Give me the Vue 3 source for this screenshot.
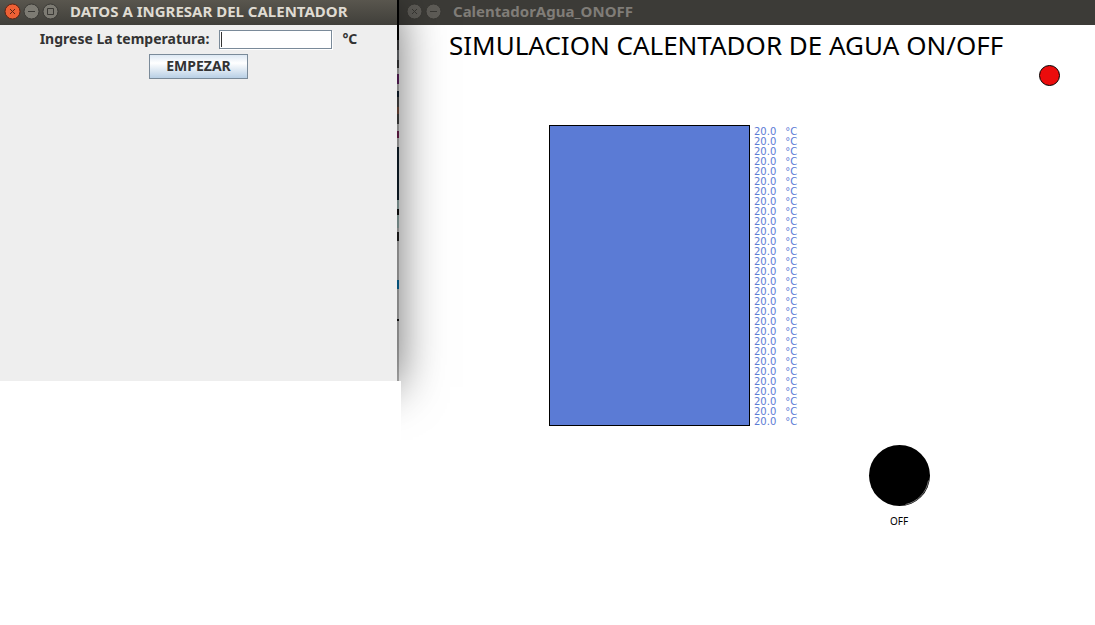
<script setup>
import { ref } from 'vue'

const temperature = ref('')
const readings = Array.from({ length: 30 }, () => '20.0')
</script>

<template>
  <main class="desktop">
    <div class="backdrop"></div>

    <section class="window simulation">
      <header class="titlebar inactive">
        <button class="control" type="button" aria-label="Cerrar">
          <svg viewBox="0 0 17 17"><circle cx="8.500" cy="8.500" r="7.500" /><path d="M6 6l5 5M11 6l-5 5" /></svg>
        </button>
        <button class="control" type="button" aria-label="Minimizar">
          <svg viewBox="0 0 17 17"><circle cx="8.500" cy="8.500" r="7.500" /><path d="M5 8.500h7" /></svg>
        </button>
        <span class="caption">CalentadorAgua_ONOFF</span>
      </header>
      <div class="canvas">
        <h1>SIMULACION CALENTADOR DE AGUA ON/OFF</h1>
        <div class="lamp-row">
          <svg class="lamp" viewBox="0 0 22 22"><circle cx="11.500" cy="11.500" r="10" /></svg>
        </div>
        <div class="tank-row">
          <div class="tank"></div>
          <ul class="readings">
            <li v-for="(value, i) in readings" :key="i"><span>{{ value }}</span><span>°C</span></li>
          </ul>
        </div>
        <div class="burner">
          <svg viewBox="0 0 62 62">
            <circle cx="31.500" cy="30.500" r="30.500" />
            <path d="M60.500 35.500A29.500 29.500 0 0 1 37.500 59.500" />
          </svg>
          <span>OFF</span>
        </div>
      </div>
    </section>

    <section class="window dialog">
      <header class="titlebar">
        <button class="control close" type="button" aria-label="Cerrar">
          <svg viewBox="0 0 17 17"><circle cx="8.500" cy="8.500" r="7.500" /><path d="M6 6l5 5M11 6l-5 5" /></svg>
        </button>
        <button class="control" type="button" aria-label="Minimizar">
          <svg viewBox="0 0 17 17"><circle cx="8.500" cy="8.500" r="7.500" /><path d="M5 8.500h7" /></svg>
        </button>
        <button class="control" type="button" aria-label="Maximizar">
          <svg viewBox="0 0 17 17"><circle cx="8.500" cy="8.500" r="7.500" /><path d="M5.500 5.500h6v6h-6z" /></svg>
        </button>
        <span class="caption">DATOS A INGRESAR DEL CALENTADOR</span>
      </header>
      <form class="form" @submit.prevent>
        <div class="field">
          <label for="temperature">Ingrese La temperatura:</label>
          <div class="entry">
            <input id="temperature" v-model="temperature" type="text" />
            <i class="caret"></i>
          </div>
          <span>°C</span>
        </div>
        <button class="start" type="submit">EMPEZAR</button>
      </form>
    </section>

    <div class="blank"></div>
  </main>
</template>

<style>
body {
  background: #fff;
}
</style>

<style scoped>
.desktop {
  position: relative;
  min-height: 100vh;
  overflow: hidden;
  font-family: "DejaVu Sans", sans-serif;
}

.backdrop {
  position: absolute;
  left: 397px;
  top: 0;
  width: 2px;
  height: 381px;
  background: linear-gradient(
    #000 0 40px, #3c3c3e 40px 50px, #73767a 50px 60px, #3c3c3e 60px 68px,
    #bbb 68px 74px, #602060 74px 84px, #bbb 84px 91px, #102030 91px 97px,
    #4a4a4a 97px 107px, #7a5040 107px 114px, #454545 114px 124px,
    #bbb 124px 131px, #702050 131px 138px, #bbb 138px 147px,
    #10202c 147px 200px, #9bb5b3 200px 209px, #101010 209px 215px,
    #9bb5b3 215px 228px, #bbb 228px 232px, #222 232px 241px,
    #bbb 241px 280px, #0870a8 280px 289px, #bbb 289px 319px,
    #111 319px 321px, #bbb 321px
  );
}

.window {
  position: absolute;
  top: 0;
}

.simulation {
  left: 399px;
  right: 0;
  bottom: 0;
  background: #fff;
}

.dialog {
  left: 0;
  width: 397px;
  height: 381px;
  background: #eee;
  box-shadow: 0 6px 44px rgba(0, 0, 0, 0.6);
}

.blank {
  position: absolute;
  top: 381px;
  bottom: 0;
  left: 0;
  width: 401px;
  background: #fff;
}

.titlebar {
  display: flex;
  align-items: center;
  gap: 2px;
  height: 25px;
  padding: 0 4px 2px;
  box-sizing: border-box;
  background: linear-gradient(#59564e, #403f3a);
  color: #dfdbd2;
  font: bold 15px/20px "Noto Sans", "Open Sans", sans-serif;
  white-space: nowrap;
}

.titlebar.inactive {
  padding-left: 7px;
  background: #3c3b37;
  color: #807d78;
}

.control {
  flex: none;
  width: 17px;
  height: 17px;
  padding: 0;
  border: 0;
  background: none;
}

.control svg {
  display: block;
  width: 17px;
  height: 17px;
  fill: #7d7b73;
  stroke: #3a3935;
  stroke-width: 1;
}

.control.close svg {
  fill: #ee6035;
  stroke: #5a2414;
}

.inactive .control svg {
  fill: #5e5c57;
  stroke: #393834;
}

.caption {
  margin-left: 9px;
  padding-bottom: 2px;
}

.form {
  display: flex;
  flex-direction: column;
  align-items: center;
  gap: 5px;
  padding-top: 5px;
  color: #333;
  font: bold 14px/17px "Noto Sans", sans-serif;
}

.field {
  display: flex;
  align-items: center;
  gap: 10px;
}

.field label,
.field span {
  padding-bottom: 2px;
}

.entry {
  position: relative;
  display: flex;
}

.entry input {
  width: 113px;
  height: 19px;
  padding: 0 3px;
  box-sizing: border-box;
  border: 1px solid #7a8a99;
  border-radius: 0;
  outline: 0;
  background: #fff;
  box-shadow: 1px 1px #fff;
  font: inherit;
}

.caret {
  position: absolute;
  left: 2px;
  top: 2px;
  width: 1px;
  height: 15px;
  background: #333;
}

.start {
  height: 25px;
  padding: 0 16px 2px;
  border: 1px solid #7a8a99;
  border-radius: 0;
  background: linear-gradient(#dde8f3, #fff 35%, #b8cfe5);
  color: #333;
  font: inherit;
}

.canvas {
  padding: 3px 35px 0 50px;
}

h1 {
  margin: 0;
  color: #000;
  font: 26px/34px "Noto Sans", sans-serif;
  white-space: nowrap;
}

.lamp-row {
  display: flex;
  justify-content: flex-end;
  margin-top: 2px;
}

.lamp {
  width: 22px;
  height: 22px;
  fill: #eb0c0c;
  stroke: #000;
  stroke-width: 1;
}

.tank-row {
  display: flex;
  gap: 4px;
  margin: 39px 0 0 100px;
}

.tank {
  width: 201px;
  height: 301px;
  box-sizing: border-box;
  border: 1px solid #000;
  background: #5b7bd5;
}

.readings {
  margin: 2px 0 0;
  padding: 0;
  list-style: none;
  color: #5b7bd5;
  font: 10px/10px "DejaVu Sans", sans-serif;
}

.readings li {
  display: flex;
  gap: 9px;
}

.burner {
  display: flex;
  flex-direction: column;
  align-items: center;
  gap: 7px;
  width: 60px;
  margin: 18px 0 0 420px;
  color: #000;
  font: 10px/14px "Noto Sans", sans-serif;
}

.burner svg {
  width: 62px;
  height: 62px;
}

.burner path {
  fill: none;
  stroke: #777;
  stroke-width: 1;
}
</style>
